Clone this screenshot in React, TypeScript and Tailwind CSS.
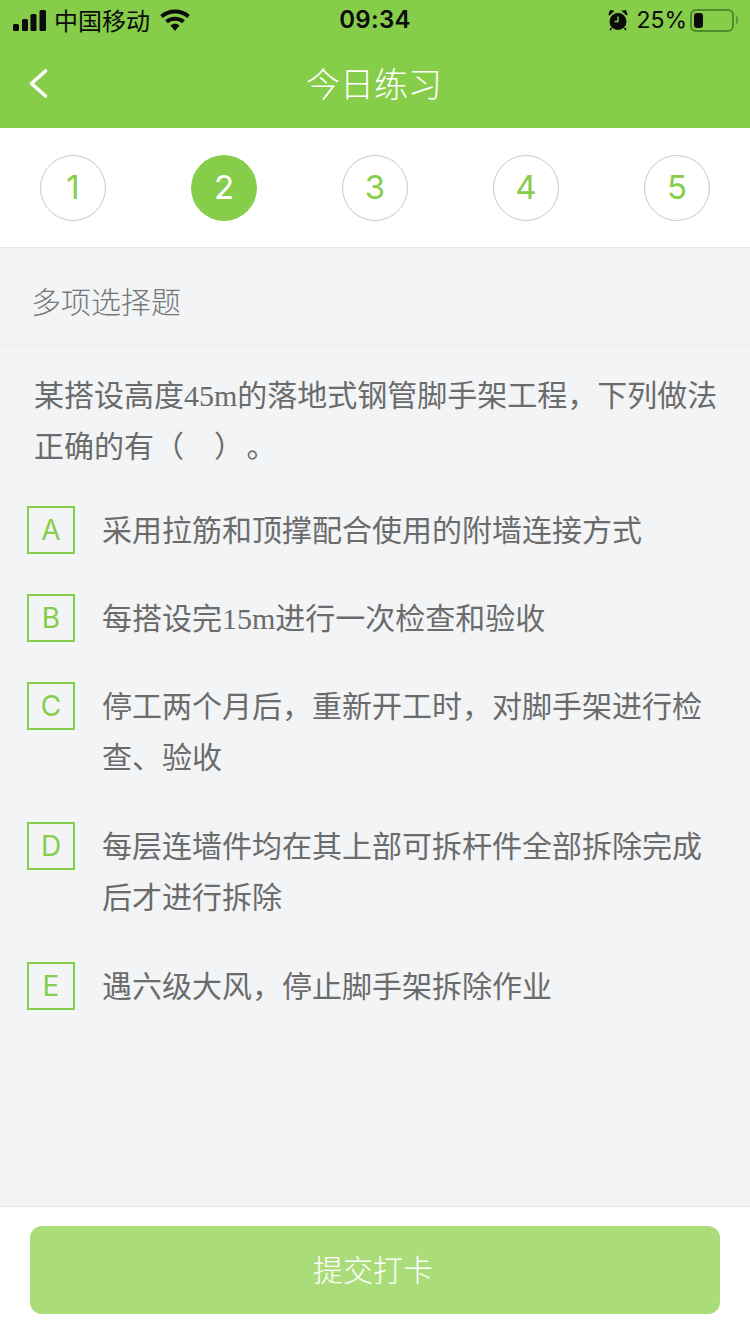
const Cjk = "font-['Liberation_Serif','Noto_Sans_CJK_SC',serif]";

function Signal() {
  return (
    <svg width="33" height="21" viewBox="0 0 33 21" fill="#0b0b0b">
      <rect x="0" y="14" width="6" height="7" rx="1.5" />
      <rect x="9" y="9" width="6" height="12" rx="1.5" />
      <rect x="17.5" y="4" width="6" height="17" rx="1.5" />
      <rect x="26.5" y="0" width="6.5" height="21" rx="1.5" />
    </svg>
  );
}

function Wifi() {
  return (
    <svg width="30" height="22" viewBox="0 0 30 22" fill="none" stroke="#0b0b0b" strokeWidth="4">
      <path d="M1.5 7.5 C9 0.8 21 0.8 28.5 7.5" />
      <path d="M6.5 12.8 C11 8.8 19 8.8 23.5 12.8" />
      <path d="M10.5 16.5 L15 22 L19.5 16.5 C17 14 13 14 10.5 16.5 Z" fill="#0b0b0b" stroke="none" />
    </svg>
  );
}

function Alarm() {
  return (
    <svg width="20" height="21" viewBox="0 0 20 21">
      <circle cx="10" cy="11.5" r="8.5" fill="#0b0b0b" />
      <path d="M1 5 L5 1.2 L2.5 0.8 Z M19 5 L15 1.2 L17.5 0.8 Z" fill="#0b0b0b" stroke="#0b0b0b" strokeWidth="1.4" />
      <path d="M3.5 18 L2 20 M16.5 18 L18 20" stroke="#0b0b0b" strokeWidth="1.6" />
      <path d="M10 6.5 V11.5 H6.5" stroke="#86cd4a" strokeWidth="1.5" fill="none" />
    </svg>
  );
}

function Battery() {
  return (
    <div className="flex items-center gap-[2px]">
      <div className="flex h-[23px] w-[44px] items-center rounded-[6px] border-2 border-[#4f8a2c] p-[2px]">
        <div className="h-[15px] w-[9px] rounded-[3px] bg-[#0b0b0b]" />
      </div>
      <div className="h-[8px] w-[2px] rounded-r-full bg-[#5d9a35]" />
    </div>
  );
}

const steps = [1, 2, 3, 4, 5];

const options: { key: string; lines: string[] }[] = [
  { key: "A", lines: ["采用拉筋和顶撑配合使用的附墙连接方式"] },
  { key: "B", lines: ["每搭设完15m进行一次检查和验收"] },
  { key: "C", lines: ["停工两个月后，重新开工时，对脚手架进行检", "查、验收"] },
  { key: "D", lines: ["每层连墙件均在其上部可拆杆件全部拆除完成", "后才进行拆除"] },
  { key: "E", lines: ["遇六级大风，停止脚手架拆除作业"] },
];

export default function App() {
  return (
    <div className="flex h-[1334px] w-[750px] flex-col overflow-hidden bg-[#f2f4f6]">
      <header className="h-[128px] shrink-0 bg-[#86cd4a]">
        <div className="relative flex h-[40px] items-center justify-between pl-[13px] pr-[12px] font-['Inter','Noto_Sans_CJK_SC',sans-serif] text-[#0b0b0b]">
          <div className="flex items-center">
            <Signal />
            <span className="ml-[8px] font-['Noto_Sans_CJK_SC',sans-serif] text-[24px] leading-[32px]">中国移动</span>
            <span className="ml-[10px] flex"><Wifi /></span>
          </div>
          <span className="absolute left-0 right-0 text-center text-[24px] font-semibold leading-[32px] tracking-[0.3px]">09:34</span>
          <div className="flex items-center">
            <Alarm />
            <span className="ml-[8px] text-[23px] font-normal leading-[32px]">25%</span>
            <span className="ml-[3px] flex"><Battery /></span>
          </div>
        </div>
        <div className="relative flex h-[88px] items-center justify-center pb-[2px]">
          <svg className="absolute left-[28px] top-[27px]" width="22" height="34" viewBox="0 0 22 34" fill="none" stroke="#ffffff" strokeWidth="3.6" strokeLinecap="round" strokeLinejoin="round">
            <path d="M17.5 4 L3.5 16.5 L17.5 29" />
          </svg>
          <h1 className="pr-[2px] font-['Noto_Sans_CJK_SC',sans-serif] text-[34px] font-light leading-[44px] text-white">今日练习</h1>
        </div>
      </header>

      <nav className="flex h-[120px] shrink-0 items-center justify-between border-b border-[#e8e8e8] bg-white px-[40px] pt-[1px]">
        {steps.map((n) =>
          n === 2 ? (
            <div key={n} className="flex h-[66px] w-[66px] items-center justify-center rounded-full bg-[#86cd4a] font-['Inter',sans-serif] text-[33px] font-normal text-white">
              {n}
            </div>
          ) : (
            <div key={n} className="flex h-[66px] w-[66px] items-center justify-center rounded-full border border-[#c8c8c8] font-['Inter',sans-serif] text-[33px] font-normal text-[#86cd4a]">
              {n}
            </div>
          ),
        )}
      </nav>

      <div className="flex h-[98px] shrink-0 items-center border-b border-[#e9ebed] pl-[31px] pt-[8px] font-['Noto_Sans_CJK_SC',sans-serif] text-[30px] font-light text-[#777777]">
        多项选择题
      </div>

      <main className="min-h-0 flex-1">
        <p className={`${Cjk} pl-[34px] pr-[30px] pt-[24px] text-[30px] leading-[51px] text-[#6b6b6b]`}>
          某搭设高度45m的落地式钢管脚手架工程，下列做法
          <br />
          正确的有（&nbsp;&nbsp;&nbsp;&nbsp;）<span className="text-[10px] leading-none">&nbsp;</span>。
        </p>
        <ul className="mt-[33px] flex flex-col pl-[27px]">
          {options.map((o) => (
            <li key={o.key} className={o.lines.length > 1 ? "flex items-start pb-[38px]" : "flex items-start pb-[37px]"}>
              <span className="mt-[1px] flex h-[48px] w-[48px] shrink-0 items-center justify-center border-2 border-[#86cd4a] font-['Inter',sans-serif] text-[28px] font-normal text-[#86cd4a]">
                {o.key}
              </span>
              <div className={`${Cjk} ml-[27px] text-[30px] leading-[51px] text-[#6b6b6b]`}>
                {o.lines.map((l) => (
                  <div key={l}>{l}</div>
                ))}
              </div>
            </li>
          ))}
        </ul>
      </main>

      <footer className="flex h-[128px] shrink-0 items-start border-t border-[#e8e8e8] bg-white px-[30px] pt-[19px]">
        <button className="flex h-[88px] w-full items-center justify-center rounded-[12px] bg-[#aadc7a] pb-[4px] pr-[4px] font-['Noto_Sans_CJK_SC',sans-serif] text-[30px] font-light text-white">
          提交打卡
        </button>
      </footer>
    </div>
  );
}
